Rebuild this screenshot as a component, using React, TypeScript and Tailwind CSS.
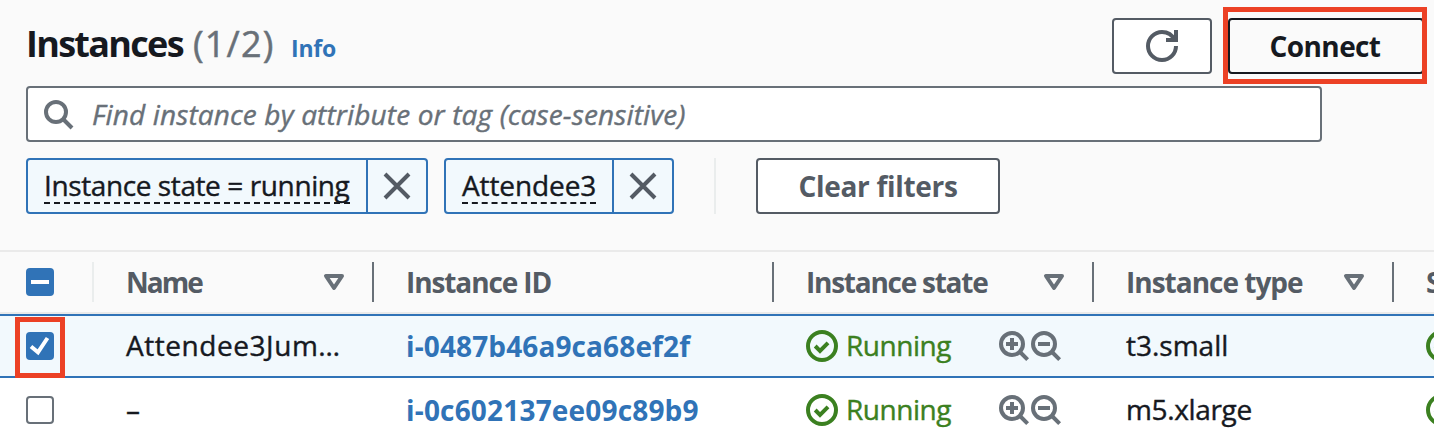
import React from 'react';

type IconProps = { className?: string; children: React.ReactNode };

function Icon({ className = '', children }: IconProps) {
  return (
    <svg
      viewBox="0 0 16 16"
      className={`block size-8 shrink-0 ${className}`}
      fill="none"
      stroke="currentColor"
      strokeWidth={2}
    >
      {children}
    </svg>
  );
}

const Close = () => (
  <Icon className="text-[#545b64]">
    <path d="m2 2 12 12M14 2 2 14" />
  </Icon>
);

const Caret = () => (
  <Icon className="text-[#687078]">
    <path d="M4 5h8l-4 6-4-6z" strokeLinejoin="round" />
  </Icon>
);

const Ok = () => (
  <Icon className="text-[#3b8020]">
    <circle cx="8" cy="8" r="7" />
    <path d="m4.6 8 2.4 2.4 4-4" />
  </Icon>
);

function Magnifier({ plus }: { plus?: boolean }) {
  return (
    <Icon className="text-[#687078]">
      <circle cx="7" cy="7" r="5.5" />
      <path d="m11 11 3.8 3.8M4 7h6" />
      {plus && <path d="M7 4v6" />}
    </Icon>
  );
}

function Chip({ label, className, tracking }: { label: string; className: string; tracking: string }) {
  return (
    <div className={`flex h-14 shrink-0 rounded-[4px] border-2 border-[#3073b7] bg-[#f2f9fd] ${className}`}>
      <div className="flex min-w-0 flex-1 items-start px-4 pt-2">
        <span className={`block h-9 w-full whitespace-nowrap border-b-2 border-dashed border-[#16191f] leading-[34px] [-webkit-text-stroke:0.4px] ${tracking}`}>
          {label}
        </span>
      </div>
      <div className="flex w-[60px] items-center justify-center border-l-2 border-[#3073b7]">
        <Close />
      </div>
    </div>
  );
}

function Head({ label, className, tracking = '', caret }: { label: string; className: string; tracking?: string; caret?: boolean }) {
  return (
    <div className={`flex h-10 shrink-0 items-center justify-between border-l-2 pl-8 pr-[22px] ${className}`}>
      <span className={`whitespace-nowrap ${tracking}`}>{label}</span>
      {caret && <Caret />}
    </div>
  );
}

type Row = { name: string; id: string; idTracking: string; type: string; typeTracking: string; selected: boolean };

const rows: Row[] = [
  { name: 'Attendee3Jum…', id: 'i-0487b46a9ca68ef2f', idTracking: 'tracking-[0.12px]', type: 't3.small', typeTracking: 'tracking-normal', selected: true },
  { name: '–', id: 'i-0c602137ee09c89b9', idTracking: 'tracking-[0.18px]', type: 'm5.xlarge', typeTracking: 'tracking-[-0.35px]', selected: false },
];

function InstanceRow({ row }: { row: Row }) {
  return (
    <div
      className={`flex h-16 w-[1600px] items-center border-y-2 pl-[26px] ${
        row.selected ? 'border-[#3073b7] bg-[#f2f9fd]' : 'border-transparent bg-white'
      }`}
    >
      <div className="w-[100px] shrink-0">
        {row.selected ? (
          <div className="flex size-7 items-center justify-center rounded-[4px] bg-[#3073b7]">
            <svg viewBox="0 0 28 28" className="size-7" fill="none" stroke="white" strokeWidth="4">
              <path d="m5 14.5 7 5.8L21.5 6" />
            </svg>
          </div>
        ) : (
          <div className="size-7 rounded-[4px] border-2 border-[#687078] bg-white" />
        )}
      </div>
      <div className="w-[280px] shrink-0 whitespace-nowrap pb-0.5 tracking-[0.55px] [-webkit-text-stroke:0.4px]">{row.name}</div>
      <div className={`w-[400px] shrink-0 whitespace-nowrap font-bold text-[#3073b7] ${row.idTracking}`}>{row.id}</div>
      <div className="flex w-[320px] shrink-0 items-center text-[#3b8020]">
        <Ok />
        <span className="w-[160px] pb-0.5 pl-2 tracking-[-0.45px] [-webkit-text-stroke:0.4px]">Running</span>
        <Magnifier plus />
        <Magnifier />
      </div>
      <div className={`w-[300px] shrink-0 whitespace-nowrap pb-0.5 [-webkit-text-stroke:0.4px] ${row.typeTracking}`}>{row.type}</div>
      <Ok />
    </div>
  );
}

export default function App() {
  return (
    <div className="relative h-[432px] w-[1434px] overflow-hidden bg-[#fafafa] font-['Open_Sans',sans-serif] text-[28px] leading-[40px] text-[#16191f]">
      <header className="flex h-[86px] items-start pl-[26px] pt-[18px]">
        <div className="flex h-14 w-[1086px] items-baseline whitespace-nowrap">
          <h1 className="w-[167px] text-[36px] font-bold leading-[52px] tracking-[-1.7px]">Instances</h1>
          <span className="w-[98px] text-[36px] tracking-[1.2px] text-[#687078] [-webkit-text-stroke:0.5px]">(1/2)</span>
          <a className="text-[23px] font-bold tracking-[-0.2px] text-[#3073b7]">Info</a>
        </div>
        <button className="flex h-14 w-[100px] items-center justify-center rounded-[4px] border-2 border-[#545b64] bg-white text-[#545b64]">
          <Icon>
            <path d="M15 8c0 3.87-3.13 7-7 7s-7-3.13-7-7 3.13-7 7-7c2.79 0 5.2 1.63 6.33 4M10 5h5V0" />
          </Icon>
        </button>
        <button className="ml-4 h-14 w-[196px] rounded-[4px] border-2 border-[#16191f] bg-[#fafafa] pr-0.5 font-bold tracking-[-0.6px]">
          Connect
        </button>
      </header>

      <div className="ml-[26px] flex h-14 w-[1296px] items-center rounded-[4px] border-2 border-[#687078] bg-white pl-[14px]">
        <Icon className="text-[#687078]">
          <circle cx="7" cy="7" r="5" />
          <path d="m10.5 10.5 4.5 4.5" />
        </Icon>
        <span className="whitespace-nowrap pl-[18px] italic tracking-[0.14px] text-[#687078] [-webkit-text-stroke:0.4px]">
          Find instance by attribute or tag (case-sensitive)
        </span>
      </div>

      <div className="mt-4 flex pl-[26px]">
        <Chip label="Instance state = running" className="w-[402px]" tracking="tracking-[-0.4px]" />
        <Chip label="Attendee3" className="ml-4 w-[230px]" tracking="tracking-[-0.1px]" />
        <div className="ml-10 h-14 w-0.5 bg-[#eaeded]" />
        <button className="ml-10 h-14 w-[244px] rounded-[4px] border-2 border-[#545b64] bg-white font-bold tracking-[-0.3px] text-[#545b64]">
          Clear filters
        </button>
      </div>

      <section className="mt-9">
        <div className="flex h-16 w-[1600px] items-center border-y-2 border-[#eaeaea] pl-[26px] font-bold text-[#545b64]">
          <div className="w-[66px] shrink-0">
            <div className="flex size-7 items-center justify-center rounded-[4px] bg-[#3073b7]">
              <div className="h-1 w-[18px] bg-white" />
            </div>
          </div>
          <Head label="Name" className="w-[280px] border-[#eaeded]" tracking="tracking-[-2px]" caret />
          <Head label="Instance ID" className="w-[400px] border-[#687078]" tracking="tracking-[-1.1px]" />
          <Head label="Instance state" className="w-[320px] border-[#687078]" tracking="tracking-[-1.25px]" caret />
          <Head label="Instance type" className="w-[300px] border-[#687078]" tracking="tracking-[-1px]" caret />
          <Head label="Status check" className="w-[240px] border-[#687078]" tracking="tracking-[-1px]" />
        </div>
        {rows.map((row) => (
          <InstanceRow key={row.id} row={row} />
        ))}
      </section>

      <div className="absolute left-[1223px] top-[7px] h-[77px] w-[204px] border-[5px] border-[#ec4125]" />
      <div className="absolute left-[15px] top-[317px] h-[61px] w-[50px] border-[5px] border-[#ec4125]" />
    </div>
  );
}
